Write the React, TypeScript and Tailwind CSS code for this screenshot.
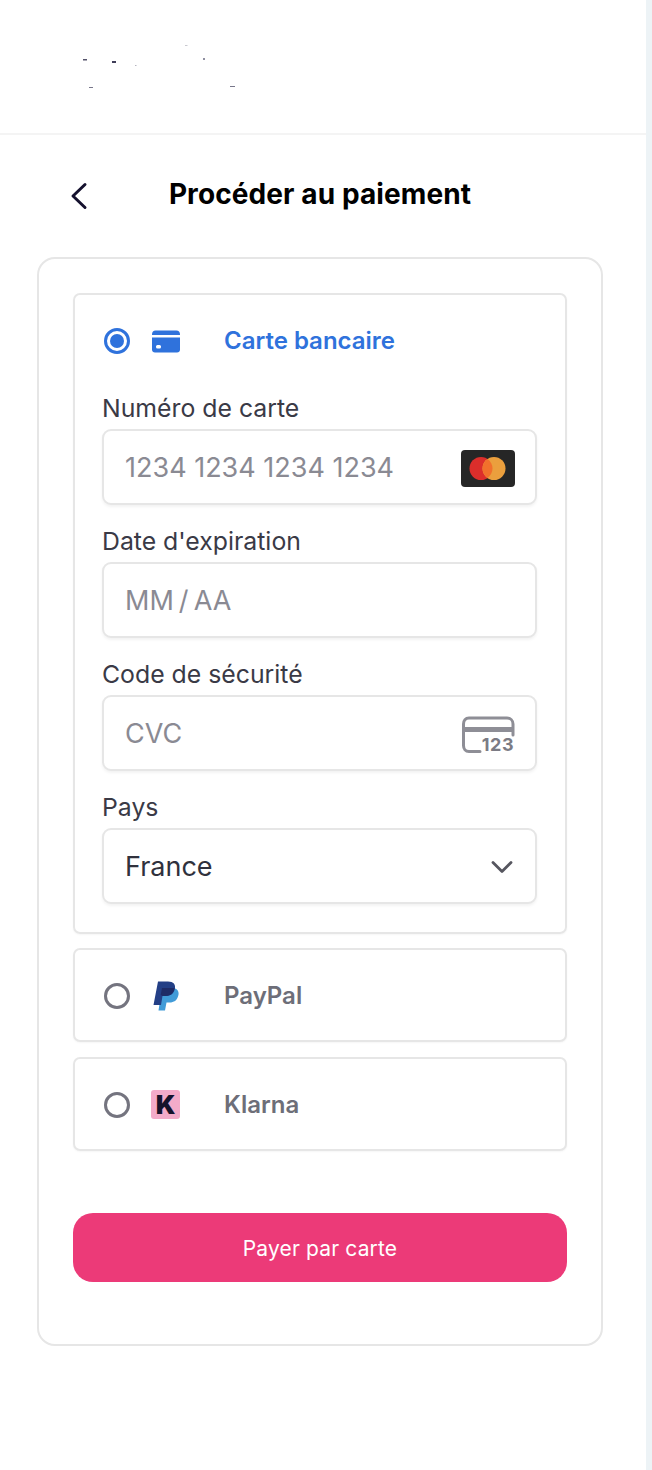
const font = { fontFamily: '"Inter", "Liberation Sans", sans-serif' };

const Specks = () => (
  <svg width="240" height="120" viewBox="0 0 240 120" className="ml-[60px] mt-[30px]">
    <rect x="23" y="29" width="4" height="1.5" fill="#55536b" />
    <rect x="52" y="31" width="4" height="2" fill="#3f3d58" />
    <rect x="75" y="35" width="1.5" height="1" fill="#b5b5c0" />
    <rect x="125" y="15" width="2.5" height="1" fill="#c9c9d0" />
    <rect x="143" y="28" width="2" height="2" fill="#8f8fa0" />
    <rect x="29" y="57" width="4" height="1" fill="#77768a" />
    <rect x="170" y="56" width="5" height="1" fill="#77768a" />
  </svg>
);

const Radio = ({ checked }: { checked?: boolean }) => (
  <span
    className={`flex h-[26px] w-[26px] shrink-0 items-center justify-center rounded-full border-[3px] ${
      checked ? "border-[#2f72dc]" : "border-[#74747f]"
    }`}
  >
    {checked && <span className="h-[14px] w-[14px] rounded-full bg-[#2f72dc]" />}
  </span>
);

const CardIcon = () => (
  <svg width="30" height="24" viewBox="0 0 30 24">
    <path d="M1 5.5C1 3 2.4 1.500 4.500 1.500h21c2.100 0 3.500 1.500 3.500 4V6H1z" fill="#2f72dc" />
    <path d="M1 8.500h28v12c0 1.800-1.200 3-3 3H4c-1.800 0-3-1.200-3-3z" fill="#2f72dc" />
    <rect x="5" y="16" width="5" height="3.500" rx="1.500" fill="#fff" />
  </svg>
);

const MastercardIcon = () => (
  <svg width="54" height="37" viewBox="0 0 54 37" className="shrink-0">
    <rect width="54" height="37" rx="4" fill="#262626" />
    <circle cx="20" cy="18.500" r="11.500" fill="#dc2e2b" />
    <circle cx="33" cy="18.500" r="11.500" fill="#eb9f3d" />
    <path d="M26.500 9a11.500 11.500 0 0 1 0 19a11.500 11.500 0 0 1 0-19z" fill="#f1702c" />
  </svg>
);

const CvcIcon = () => (
  <div className="relative h-[37px] w-[53px] shrink-0">
    <svg width="53" height="37" viewBox="0 0 53 37" fill="none" className="absolute left-0 top-0">
      <path
        d="M18 35.500H7c-3.500 0-5.500-2.500-5.500-6V8c0-3.500 2-6 5.500-6h38c3.500 0 6 2.500 6 6v11"
        stroke="#8e8e96"
        strokeWidth="3"
        strokeLinecap="round"
      />
      <rect x="0" y="11" width="52" height="5" fill="#8e8e96" />
    </svg>
    <span className="absolute bottom-[-2px] right-[1px] text-[18px] font-bold leading-[20px] tracking-[0.5px] text-[#7b7b84]">
      123
    </span>
  </div>
);

const PaypalIcon = () => (
  <svg width="26" height="30" viewBox="0 0 26 30">
    <path d="M9 7h10c5 0 7.500 3 6.300 7.500C24 19.500 21 21.500 16.500 21.500h-3L12 29.500H5.500z" fill="#419bd8" />
    <path d="M5 .500h10c5.500 0 8 3 6.800 7.500-1.200 5-4.500 7-9 7H9.500L8 24H.500z" fill="#233f86" />
    <path d="M9 7h12.700c-.1.400-.2.700-.3 1.100-1.200 4.800-4.400 6.900-8.700 6.900H9.500L7.700 14z" fill="#1e2b66" />
  </svg>
);

const KlarnaIcon = () => (
  <span className="flex h-[29px] w-[29px] items-center justify-center rounded-[3px] bg-[#f3abc9] text-[26px] font-black leading-none text-[#15132b]">
    K
  </span>
);

const Field = ({
  label,
  placeholder,
  value,
  textClass,
  children,
}: {
  label: string;
  placeholder?: string;
  value?: string;
  textClass?: string;
  children?: React.ReactNode;
}) => (
  <div>
    <label className="block h-[29px] text-[24.8px] leading-[29px] text-[#3a3a46]">{label}</label>
    <div className="mt-[6px] flex h-[76px] items-center justify-between rounded-[9px] border-2 border-[#e6e6e6] bg-white pl-[21px] pr-[20px] pt-[2px] shadow-[0_2px_3px_rgba(0,0,0,0.05)]">
      <span className={`text-[27px] ${value ? "text-[#30313d]" : "text-[#8a8a93]"} ${textClass ?? ""}`}>
        {value ?? placeholder}
      </span>
      {children}
    </div>
  </div>
);

const MethodRow = ({ name, icon }: { name: string; icon: React.ReactNode }) => (
  <div className="flex h-[94px] items-center rounded-[7px] border-2 border-[#e6e6e6] bg-white pl-[29px] pt-[1px] shadow-[0_1px_2px_rgba(0,0,0,0.04)]">
    <Radio />
    <span className="ml-[21px] flex w-[29px] justify-center">{icon}</span>
    <span className="ml-[44px] text-[24px] font-semibold text-[#6d6e78]">{name}</span>
  </div>
);

export default function App() {
  return (
    <div className="flex min-h-[1470px] w-[652px] bg-white" style={font}>
      <div className="w-[646px]">
        {/* Header */}
        <div className="h-[135px] overflow-hidden border-b-2 border-[#f4f4f4]">
          <Specks />
        </div>

        {/* Title */}
        <div className="relative mt-[31px] flex h-[56px] items-center justify-center pr-[6px]">
          <svg
            width="18"
            height="28"
            viewBox="0 0 18 28"
            fill="none"
            className="absolute left-[70px] top-[16px]"
          >
            <path d="M15 2.500L3 14l12 11.500" stroke="#15112e" strokeWidth="3" strokeLinecap="round" strokeLinejoin="round" />
          </svg>
          <h1 className="text-[28px] font-bold tracking-[0.1px] text-black">Procéder au paiement</h1>
        </div>

        {/* Card */}
        <div className="ml-[37px] mt-[35px] h-[1089px] w-[566px] rounded-[18px] border-2 border-[#e6e6e6] px-[34px] pt-[34px]">
          <div className="h-[641px] rounded-[7px] border-2 border-[#e6e6e6] pl-[27px] pr-[28px] pt-[29px] shadow-[0_1px_2px_rgba(0,0,0,0.04)]">
            <div className="ml-[2px] flex h-[34px] items-center">
              <Radio checked />
              <span className="ml-[21px]">
                <CardIcon />
              </span>
              <span className="ml-[43px] text-[24px] font-semibold text-[#2f72dc]">Carte bancaire</span>
            </div>
            <div className="mt-[36px] flex flex-col gap-[22px]">
              <Field label="Numéro de carte" placeholder="1234 1234 1234 1234">
                <MastercardIcon />
              </Field>
              <Field label="Date d'expiration" placeholder="MM / AA" textClass="[word-spacing:-2.5px]" />
              <Field label="Code de sécurité" placeholder="CVC">
                <CvcIcon />
              </Field>
              <Field label="Pays" value="France">
                <svg width="22" height="14" viewBox="0 0 22 14" fill="none" className="mr-[2px]">
                  <path d="M2 2.500l9 9 9-9" stroke="#56565f" strokeWidth="2.800" strokeLinecap="round" strokeLinejoin="round" />
                </svg>
              </Field>
            </div>
          </div>

          <div className="mt-[14px] flex flex-col gap-[15px]">
            <MethodRow name="PayPal" icon={<PaypalIcon />} />
            <MethodRow name="Klarna" icon={<KlarnaIcon />} />
          </div>

          <button className="mt-[62px] h-[69px] w-full rounded-[20px] bg-[#ec3a78] pt-[2px] text-[21px] tracking-[0.15px] text-white">
            Payer par carte
          </button>
        </div>
      </div>
      <div className="w-[6px] bg-[#edf3f6]" />
    </div>
  );
}
